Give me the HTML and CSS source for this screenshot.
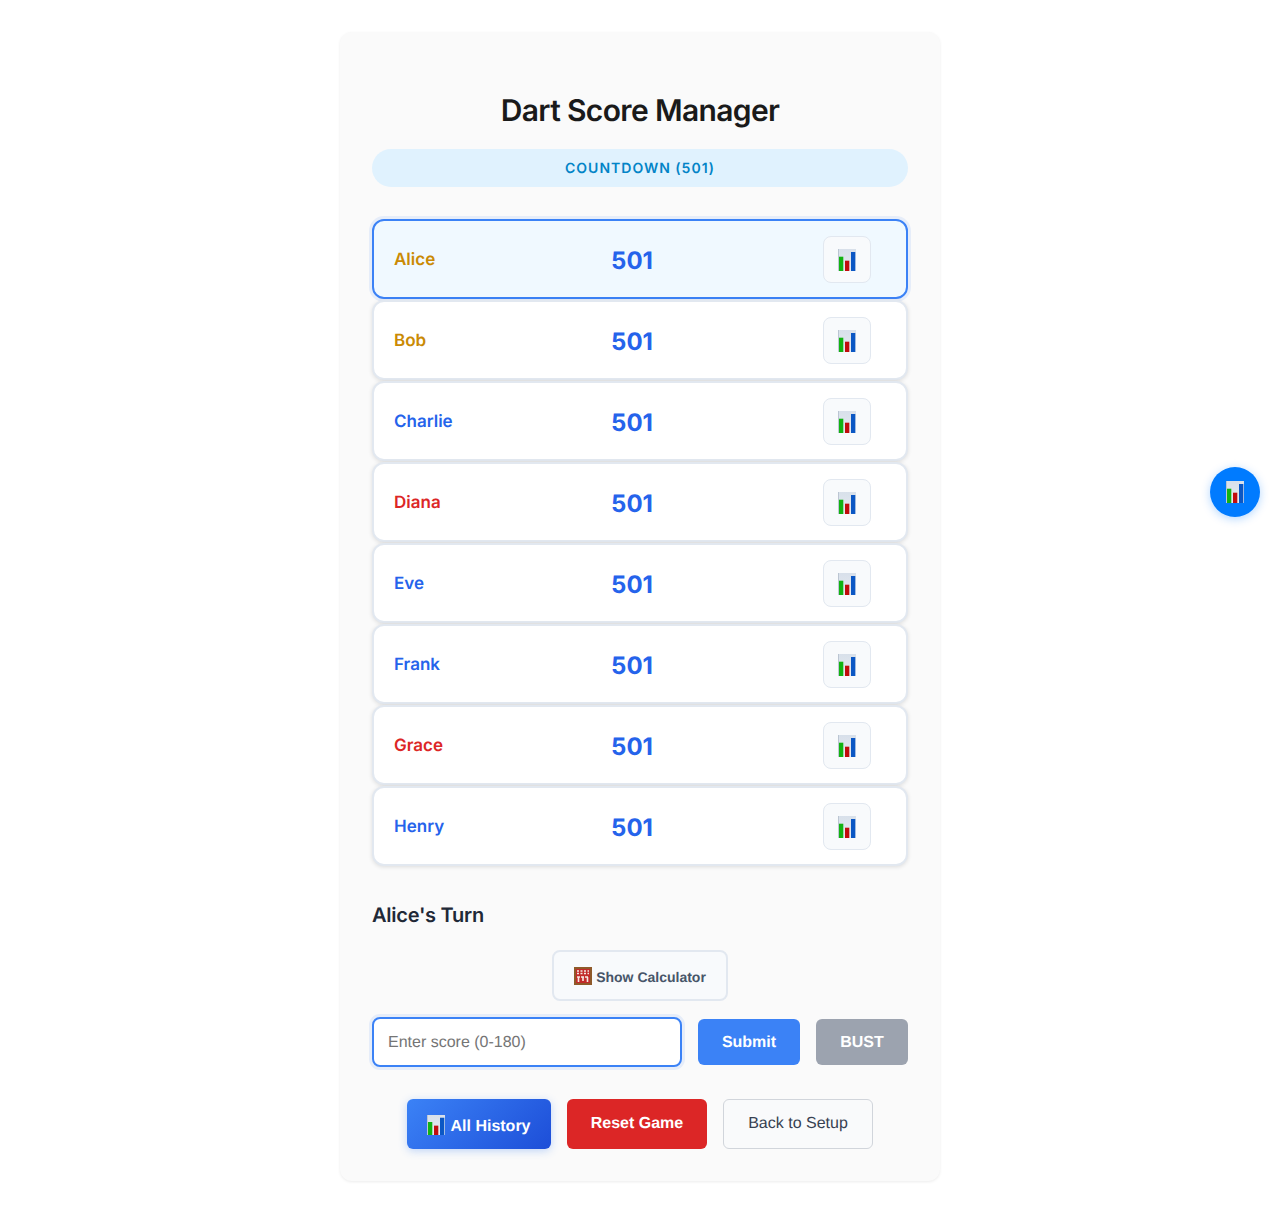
FILE: index.html
```html
<!DOCTYPE html>
<html lang="en">
<head>
  <meta charset="UTF-8">
  <meta name="viewport" content="width=device-width, initial-scale=1.0">
  <title>Dart Score Manager</title>
  <link rel="stylesheet" href="styles.css">
</head>
<body>

  <!-- Icons -->
  <svg class="defs" width="0" height="0" aria-hidden="true">
    <linearGradient id="chart-bg" x1="0" y1="0" x2="0" y2="1">
      <stop offset="0" stop-color="#d8e0ea"/>
      <stop offset="1" stop-color="#e6ebf1"/>
    </linearGradient>
    <symbol id="chart" viewBox="0 0 18 22" preserveAspectRatio="none">
      <rect width="18" height="22" fill="url(#chart-bg)"/>
      <rect x="0" y="0" width="0.700" height="22" fill="#aeb9c7"/>
      <rect x="1" y="7.700" width="4.300" height="14.300" fill="#12b312"/>
      <rect x="7" y="11.700" width="4.300" height="10.300" fill="#c10d0d"/>
      <rect x="13" y="3" width="4.300" height="19" fill="#0b57c4"/>
    </symbol>
    <symbol id="abacus" viewBox="0 0 18 18">
      <rect width="18" height="18" fill="#8f5a2a"/>
      <rect x="2" y="2" width="14" height="14" fill="#c22a2a"/>
      <path d="M3 4h12M3 6.500h12" stroke="#f5e9e4" stroke-width="1.300" stroke-dasharray="2 1.500"/>
      <path d="M3 10h12" stroke="#f5e9e4" stroke-width="1.500" stroke-dasharray="3 1"/>
      <path d="M4.500 10v5M9 10v4M13.500 10v5" stroke="#f5e9e4" stroke-width="1.600"/>
    </symbol>
  </svg>

  <div class="container">
    <h1>Dart Score Manager</h1>
    <div class="mode-badge">COUNTDOWN (501)</div>

    <div class="players">
      <div class="player active">
        <span class="name gold">Alice</span>
        <span class="score">501</span>
        <button class="stats-btn"><svg class="icon"><use href="#chart"/></svg></button>
      </div>
      <div class="player">
        <span class="name gold">Bob</span>
        <span class="score">501</span>
        <button class="stats-btn"><svg class="icon"><use href="#chart"/></svg></button>
      </div>
      <div class="player">
        <span class="name blue">Charlie</span>
        <span class="score">501</span>
        <button class="stats-btn"><svg class="icon"><use href="#chart"/></svg></button>
      </div>
      <div class="player">
        <span class="name red">Diana</span>
        <span class="score">501</span>
        <button class="stats-btn"><svg class="icon"><use href="#chart"/></svg></button>
      </div>
      <div class="player">
        <span class="name blue">Eve</span>
        <span class="score">501</span>
        <button class="stats-btn"><svg class="icon"><use href="#chart"/></svg></button>
      </div>
      <div class="player">
        <span class="name blue">Frank</span>
        <span class="score">501</span>
        <button class="stats-btn"><svg class="icon"><use href="#chart"/></svg></button>
      </div>
      <div class="player">
        <span class="name red">Grace</span>
        <span class="score">501</span>
        <button class="stats-btn"><svg class="icon"><use href="#chart"/></svg></button>
      </div>
      <div class="player">
        <span class="name blue">Henry</span>
        <span class="score">501</span>
        <button class="stats-btn"><svg class="icon"><use href="#chart"/></svg></button>
      </div>
    </div>

    <h2>Alice's Turn</h2>

    <div class="calc-row">
      <button class="calc-btn"><svg class="abacus"><use href="#abacus"/></svg><span>Show Calculator</span></button>
    </div>

    <div class="input-row">
      <input class="score-input" type="text" placeholder="Enter score (0-180)">
      <button class="btn submit">Submit</button>
      <button class="btn bust">BUST</button>
    </div>

    <div class="actions">
      <button class="btn history"><svg class="history-icon"><use href="#chart"/></svg><span>All History</span></button>
      <button class="btn reset">Reset Game</button>
      <button class="btn back">Back to Setup</button>
    </div>
  </div>

  <button class="fab"><svg class="icon"><use href="#chart"/></svg></button>

</body>
</html>
```

FILE: styles.css
```css
* {
  box-sizing: border-box;
  text-rendering: geometricPrecision;
}

body {
  font-family: Inter, "Liberation Sans", sans-serif;
  background-color: white;
  margin: 0;
  padding: 32px 0;
}

.defs {
  position: absolute;
}

.container {
  width: 600px;
  margin: 0 auto;
  padding: 32px;
  background-color: #fafafa;
  border-radius: 12px;
  box-shadow: 0 1px 3px rgba(0, 0, 0, 0.08);
}

h1 {
  margin: 29px 0 20px;
  font-size: 30px;
  line-height: 36px;
  font-weight: 600;
  letter-spacing: -0.65px;
  text-align: center;
  color: #1a1a1a;
}

.mode-badge {
  height: 38px;
  margin-bottom: 32px;
  background-color: #e0f2fe;
  border-radius: 19px;
  color: #0284c7;
  font-size: 14px;
  font-weight: 600;
  letter-spacing: 1px;
  line-height: 40px;
  text-align: center;
}

.players {
  display: flex;
  flex-direction: column;
  gap: 1px;
}

.player {
  display: grid;
  grid-template-columns: 154px 168px 1fr;
  align-items: center;
  height: 80px;
  padding: 0 35px 0 20px;
  background-color: white;
  border: 2px solid #e2e8f0;
  border-radius: 12px;
  box-shadow: 0 1px 4px rgba(0, 0, 0, 0.12);
}

.player.active {
  background-color: #f0f9ff;
  border-color: #3b82f6;
  box-shadow: 0 0 0 3px rgba(59, 130, 246, 0.1);
}

.name {
  font-size: 17px;
  font-weight: 600;
  margin-top: 1px;
}

.gold { color: #ca8a04; }
.blue { color: #2563eb; }
.red { color: #dc2626; }

.score {
  font-size: 24px;
  font-weight: 700;
  color: #2563eb;
  text-align: center;
  margin-top: 2px;
}

.stats-btn {
  justify-self: end;
  display: flex;
  align-items: center;
  justify-content: center;
  width: 48px;
  height: 47px;
  padding: 1px 0 0;
  background-color: #f8fafc;
  border: 1px solid #e2e8f0;
  border-radius: 8px;
}

.icon {
  width: 18px;
  height: 22px;
}

h2 {
  margin: 37px 0 23px;
  font-size: 20px;
  line-height: 24px;
  font-weight: 600;
  letter-spacing: -0.25px;
  color: #1f2937;
}

.calc-row {
  display: flex;
  justify-content: center;
  margin-bottom: 16px;
}

.calc-btn {
  display: flex;
  align-items: center;
  gap: 4px;
  height: 51px;
  padding: 0 20px;
  background-color: #f8fafc;
  border: 2px solid #e2e8f0;
  border-radius: 8px;
  color: #475569;
  font-family: "Liberation Sans", sans-serif;
  font-size: 14px;
  font-weight: 700;
}

.calc-btn span {
  margin-top: 2px;
}

.abacus {
  width: 18px;
  height: 18px;
}

.input-row {
  display: flex;
  align-items: center;
  gap: 16px;
  margin-bottom: 32px;
}

.score-input {
  width: 310px;
  height: 50px;
  padding: 2px 14px 0;
  background-color: white;
  border: 2px solid #3b82f6;
  border-radius: 8px;
  box-shadow: 0 0 0 3px rgba(59, 130, 246, 0.1);
  font-family: "Liberation Sans", sans-serif;
  font-size: 16px;
  outline: none;
}

.score-input::placeholder {
  color: #757575;
}

.btn {
  height: 46px;
  padding: 1px 0 0;
  border: none;
  border-radius: 6px;
  color: white;
  font-family: "Liberation Sans", sans-serif;
  font-size: 16px;
  font-weight: 700;
}

.submit {
  width: 102px;
  background-color: #3b82f6;
}

.bust {
  width: 92px;
  background-color: #9ca3af;
}

.actions {
  display: flex;
  justify-content: center;
  gap: 16px;
}

.actions .btn {
  height: 50px;
}

.history {
  display: flex;
  align-items: center;
  justify-content: center;
  gap: 5px;
  width: 144px;
  background: linear-gradient(135deg, #3b82f6, #1d4ed8);
  box-shadow: 0 2px 8px rgba(59, 130, 246, 0.3);
}

.history-icon {
  width: 18px;
  height: 20px;
}

.history span {
  margin-top: 4px;
}

.actions .reset {
  width: 140px;
  padding: 0;
  background-color: #dc2626;
}

.actions .back {
  width: 150px;
  padding: 0;
  background-color: #f9fafb;
  border: 1px solid #d1d5db;
  color: #374151;
  font-weight: 400;
}

/* floating stats button */
.fab {
  position: fixed;
  top: 467px;
  right: 20px;
  display: flex;
  align-items: center;
  justify-content: center;
  width: 50px;
  height: 50px;
  padding: 0;
  background-color: #007bff;
  border: none;
  border-radius: 50%;
  box-shadow: 0 2px 10px rgba(0, 123, 255, 0.3);
}
```
